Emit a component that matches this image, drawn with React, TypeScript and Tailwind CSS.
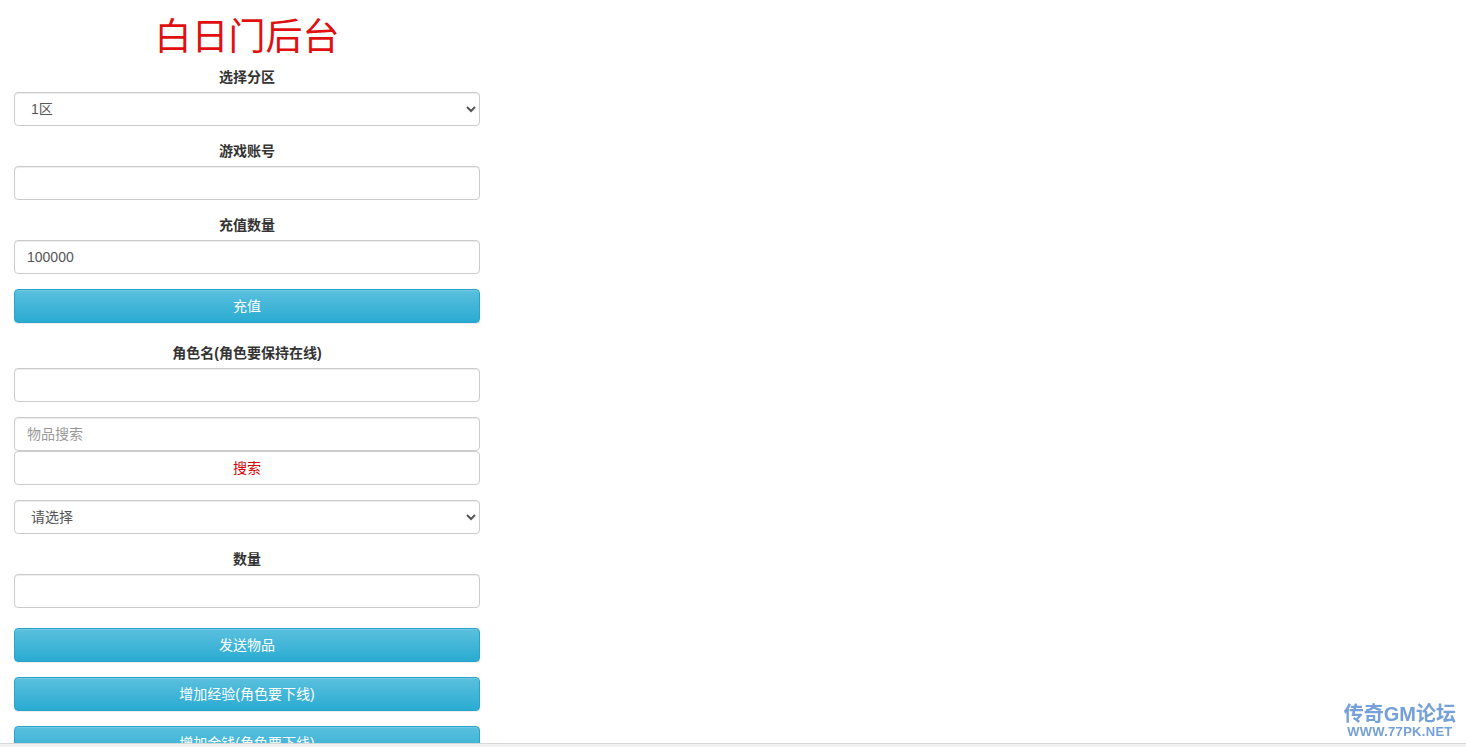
const font = "font-['Liberation_Sans','Noto_Sans_CJK_SC',sans-serif]";

function Label({ children }: { children: React.ReactNode }) {
  return (
    <div className="mb-[5px] h-[19px] text-center text-[14px] font-bold leading-[19px] text-[#333]">
      {children}
    </div>
  );
}

function TextInput({ value, placeholder }: { value?: string; placeholder?: string }) {
  return (
    <input
      type="text"
      defaultValue={value}
      placeholder={placeholder}
      className="block h-[34px] w-full rounded-[4px] border border-[#ccc] bg-white px-3 text-[14px] text-[#555] shadow-[inset_0_1px_1px_rgba(0,0,0,0.075)] outline-none placeholder:text-[#999]"
    />
  );
}

function Select({ options }: { options: string[] }) {
  return (
    <select className="block h-[34px] w-full rounded-[4px] border border-[#ccc] bg-white px-3 text-[14px] text-[#555] shadow-[inset_0_1px_1px_rgba(0,0,0,0.075)] outline-none">
      {options.map((o) => (
        <option key={o}>{o}</option>
      ))}
    </select>
  );
}

function InfoButton({ children }: { children: React.ReactNode }) {
  return (
    <button className="block h-[34px] w-full rounded-[4px] border border-[#28a4c9] bg-[linear-gradient(#5bc0de,#2aabd2)] text-[14px] text-white shadow-[inset_0_1px_0_rgba(255,255,255,0.15),0_1px_1px_rgba(0,0,0,0.075)]">
      {children}
    </button>
  );
}

export default function App() {
  return (
    <div className={`min-h-screen bg-white ${font}`}>
      <div className="w-[494px] px-[14px] pb-10">
        <h1 className="mt-[17px] h-[41px] text-center text-[37px] font-normal leading-[41px] text-[#e01010]">
          白日门后台
        </h1>
        <div className="mt-[10px]">
          <Label>选择分区</Label>
          <Select options={["1区", "2区", "3区"]} />
        </div>
        <div className="mt-4">
          <Label>游戏账号</Label>
          <TextInput />
        </div>
        <div className="mt-4">
          <Label>充值数量</Label>
          <TextInput value="100000" />
        </div>
        <div className="mt-[15px]">
          <InfoButton>充值</InfoButton>
        </div>
        <div className="mt-[21px]">
          <Label>角色名(角色要保持在线)</Label>
          <TextInput />
        </div>
        <div className="mt-[15px]">
          <TextInput placeholder="物品搜索" />
          <button className="block h-[34px] w-full rounded-[4px] border border-[#ccc] bg-white text-[14px] text-[#d40000]">
            搜索
          </button>
        </div>
        <div className="mt-[15px]">
          <Select options={["请选择"]} />
        </div>
        <div className="mt-4">
          <Label>数量</Label>
          <TextInput />
        </div>
        <div className="mt-5 flex flex-col gap-[15px]">
          <InfoButton>发送物品</InfoButton>
          <InfoButton>增加经验(角色要下线)</InfoButton>
          <InfoButton>增加金钱(角色要下线)</InfoButton>
        </div>
      </div>

      <div className="fixed right-[10px] bottom-[8px] flex flex-col items-center text-[#75a0d8]">
        <span className="text-[20px] leading-[22px] font-bold">传奇GM论坛</span>
        <span className="text-[13px] leading-[14px] font-bold tracking-[0.3px]">WWW.77PK.NET</span>
      </div>
      <div className="fixed inset-x-0 bottom-0 h-[4px] border-t border-[#d6d6d6] bg-[#f1f1f1]" />
    </div>
  );
}
